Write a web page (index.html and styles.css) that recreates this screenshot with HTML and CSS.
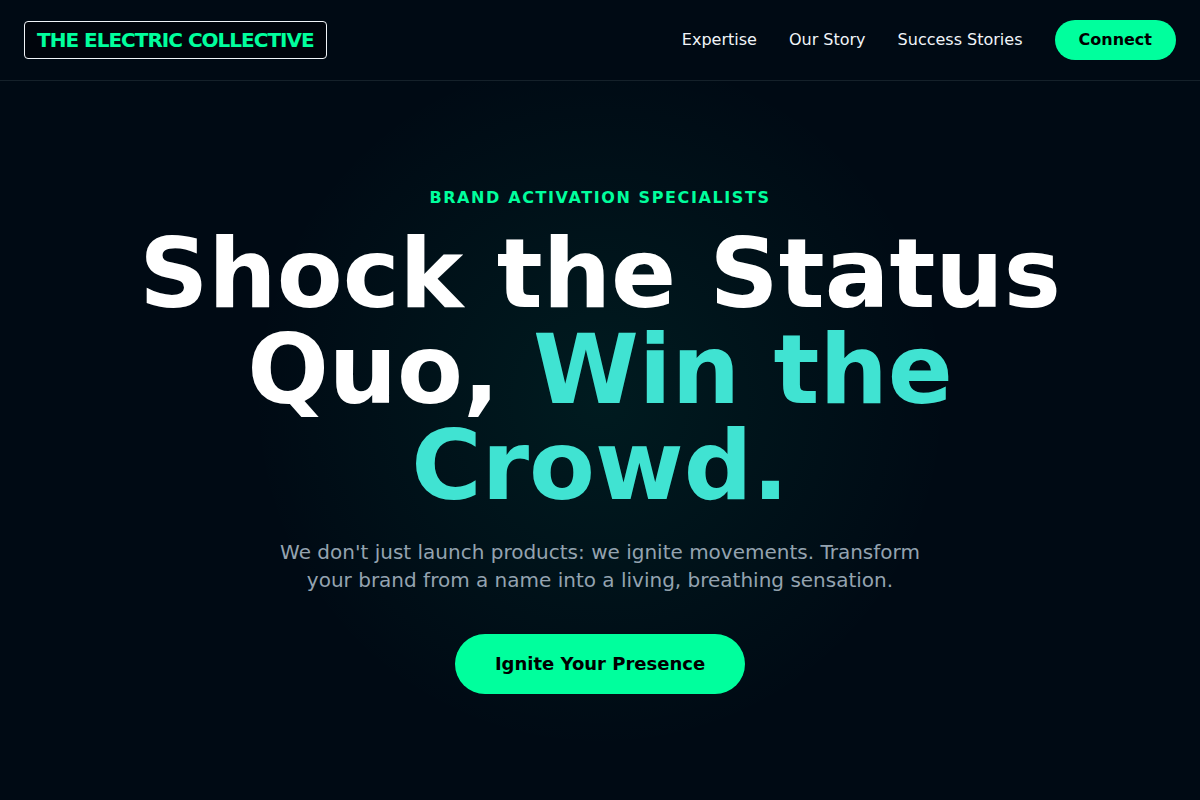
FILE: index.html
```html
<!DOCTYPE html>
<html lang="en">
  <head>
    <meta charset="utf-8" />
    <meta name="viewport" content="width=device-width, initial-scale=1" />
    <title>The Electric Collective</title>
    <link rel="stylesheet" href="styles.css">
  </head>
  <body>

<header class="site-header">
  <a class="logo" href="#">THE ELECTRIC COLLECTIVE</a>
  <nav class="nav">
    <a class="nav-link" href="#expertise">Expertise</a>
    <a class="nav-link" href="#story">Our Story</a>
    <a class="nav-link" href="#stories">Success Stories</a>
    <button class="btn" type="button">Connect</button>
  </nav>
</header>

<main class="hero">
  <p class="eyebrow">BRAND ACTIVATION SPECIALISTS</p>
  <h1 class="title">Shock the Status Quo, <span class="accent">Win the Crowd.</span></h1>
  <p class="lead">We don't just launch products: we ignite movements. Transform your brand from a name into a living, breathing sensation.</p>
  <button class="btn btn-large" type="button">Ignite Your Presence</button>
</main>

  </body>
</html>
```
FILE: styles.css
```css
* {
  box-sizing: border-box;
}

body {
  margin: 0;
  min-height: 100vh;
  display: flex;
  flex-direction: column;
  background: radial-gradient(circle at center, rgba(0, 229, 170, 0.08), transparent 350px) #000a14;
  color: #f1f5f9;
  font-family: "DejaVu Sans", sans-serif;
  font-size: 16px;
  line-height: 24px;
}

a {
  color: inherit;
  text-decoration: none;
}

.site-header {
  display: flex;
  align-items: center;
  justify-content: space-between;
  padding: 20px 24px;
  background: #000a14;
  box-shadow: 0 1px 0 #15212a;
}

.logo {
  padding: 4px 12px;
  border: 1px solid #f1f5f9;
  border-radius: 4px;
  background: #00050c;
  color: #00ff9d;
  font-size: 20px;
  font-weight: bold;
  line-height: 28px;
  letter-spacing: -1px;
}

.nav {
  display: flex;
  align-items: center;
  gap: 32px;
}

.btn {
  padding: 8px 24px;
  border: 0;
  border-radius: 999px;
  background: #00ff9d;
  color: #000;
  font: bold 16px/24px "DejaVu Sans", sans-serif;
  cursor: pointer;
}

.btn-large {
  padding: 16px 40px;
  font-size: 18px;
  line-height: 28px;
}

.hero {
  flex: 1;
  display: flex;
  flex-direction: column;
  align-items: center;
  justify-content: center;
  padding: 0 24px;
  text-align: center;
}

.eyebrow {
  margin: 0 0 16px;
  color: #00ff9d;
  font-weight: bold;
  letter-spacing: 0.1em;
}

.title {
  max-width: 1024px;
  margin: 0 0 24px;
  color: #fff;
  font-size: 96px;
  line-height: 96px;
}

.accent {
  color: #40e3d2;
}

.lead {
  max-width: 672px;
  margin: 0 0 40px;
  color: #94a3b0;
  font-size: 20px;
  line-height: 28px;
}
```
